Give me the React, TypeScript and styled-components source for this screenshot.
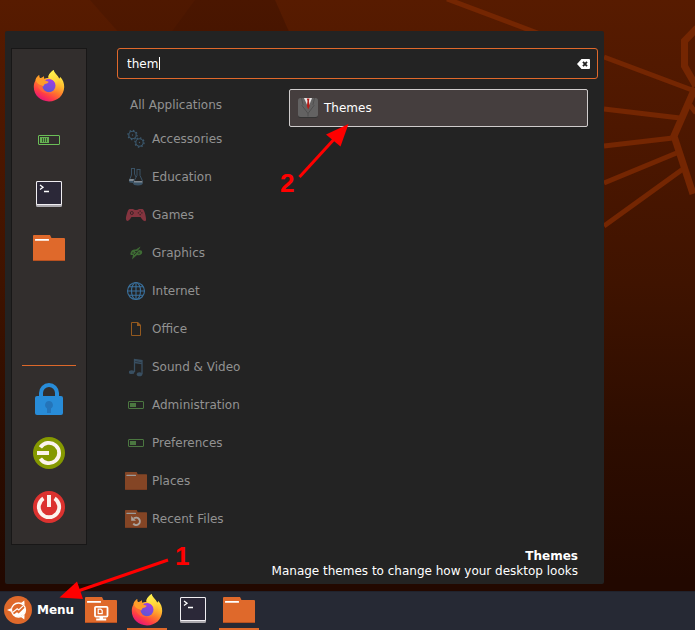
import React, { useState } from "react";
import styled, { createGlobalStyle } from "styled-components";

const GlobalStyle = createGlobalStyle`
  * { box-sizing: border-box; }
  body { margin: 0; font-family: "DejaVu Sans", sans-serif; font-size: 12px; line-height: 15px; color: #fff; }
  button { font: inherit; color: inherit; border: 0; padding: 0; background: none; cursor: pointer; }
  svg { display: block; flex: none; }
`;

const Desktop = styled.div`
  position: relative;
  display: flex;
  flex-direction: column;
  min-height: 100vh;
  overflow: hidden;
  background: linear-gradient(#571b00 0%, #4d1700 20%, #3f1300 45%, #2e0d00 68%, #220800 92%);
`;

const Wallpaper = styled.svg`
  position: absolute;
  top: 0;
  right: 0;
`;

const Workspace = styled.main`
  position: relative;
  flex: 1;
  display: flex;
  padding: 31px 91px 7px 5px;
`;

const MenuPanel = styled.section`
  flex: 1;
  display: flex;
  flex-direction: column;
  padding: 17px 6px 0;
  background: #232323;
  border-radius: 2px;
`;

const PanelBody = styled.div`
  flex: 1;
  display: flex;
  gap: 30px;
`;

const Sidebar = styled.nav`
  width: 76px;
  display: flex;
  flex-direction: column;
  padding: 10px 9px;
  border: 1px solid #181717;
  background: #322e2d;
`;

const SidebarButton = styled.button`
  height: 54px;
  display: flex;
  align-items: center;
  justify-content: center;
`;

const Divider = styled.hr`
  width: 54px;
  height: 1px;
  margin: auto auto 6px;
  border: 0;
  background: #dd682a;
`;

const Content = styled.div`
  flex: 1;
  min-width: 0;
`;

const SearchBox = styled.label`
  display: flex;
  align-items: center;
  height: 31px;
  padding: 0 7px 0 9px;
  border: 1px solid #e0682b;
  border-radius: 3px;
`;

const SearchInput = styled.input`
  field-sizing: content;
  min-width: 1px;
  padding: 2px 1px 0 0;
  border: 0;
  outline: 0;
  background: none;
  color: #fff;
  caret-color: transparent;
  font: inherit;
`;

const Caret = styled.span`
  width: 1px;
  height: 13px;
  background: #fff;
`;

const ClearButton = styled.button`
  margin-left: auto;
`;

const Columns = styled.div`
  display: flex;
  padding: 10px 10px 0 0;
`;

const CategoryList = styled.ul`
  width: 172px;
  margin: 0;
  padding: 0 0 0 8px;
  list-style: none;
`;

const Category = styled.button<{ $first?: boolean }>`
  display: flex;
  align-items: center;
  gap: 5px;
  width: 100%;
  height: ${(p) => (p.$first ? 31 : 38)}px;
  padding: ${(p) => (p.$first ? "2px 0 0 5px" : "0")};
  color: #929292;
`;

const Results = styled.div`
  flex: 1;
  position: relative;
`;

const ResultButton = styled.button`
  display: flex;
  align-items: center;
  gap: 5px;
  width: 100%;
  height: 38px;
  padding: 0 7px;
  border: 1px solid #cfcccc;
  border-radius: 2px;
  background: #453e3e;
`;

const Description = styled.footer`
  padding: 4px 20px 5px;
  text-align: right;
`;

const DescriptionTitle = styled.strong`
  display: block;
`;

const Taskbar = styled.footer`
  position: relative;
  display: flex;
  gap: 6px;
  height: 39px;
  border-top: 1px solid #20222c;
  background: #262934;
`;

const MenuButton = styled.button`
  display: flex;
  align-items: center;
  gap: 5px;
  width: 75px;
  padding: 0 0 2px 4px;
  font-weight: bold;
`;

const TaskButton = styled.button<{ $open?: boolean }>`
  display: flex;
  align-items: center;
  justify-content: center;
  width: 40px;
  border-bottom: 2px solid ${(p) => (p.$open ? "#dd682a" : "transparent")};
`;

const Callout = styled.svg<{ $left: number; $top: number }>`
  position: absolute;
  left: ${(p) => p.$left}px;
  top: ${(p) => p.$top}px;
  pointer-events: none;
  fill: #f00;
  stroke: none;
  font-family: "Liberation Sans", sans-serif;
  font-size: 26px;
  font-weight: bold;
`;

function Firefox({ id }: { id: string }) {
  return (
    <svg width="32" height="32" viewBox="0 0 32 32">
      <defs>
        <linearGradient id={`${id}-body`} x1="0.8" y1="0.1" x2="0.3" y2="1">
          <stop offset="0" stopColor="#fff04a" />
          <stop offset="0.3" stopColor="#ffbd2f" />
          <stop offset="0.55" stopColor="#ff7a2c" />
          <stop offset="0.78" stopColor="#ff3d45" />
          <stop offset="1" stopColor="#e5127d" />
        </linearGradient>
        <linearGradient id={`${id}-globe`} x1="0.7" y1="0" x2="0.3" y2="1">
          <stop offset="0" stopColor="#a13ce6" />
          <stop offset="1" stopColor="#5a58cf" />
        </linearGradient>
        <linearGradient id={`${id}-flame`} x1="0.4" y1="0" x2="0.6" y2="1">
          <stop offset="0" stopColor="#fff44f" />
          <stop offset="0.5" stopColor="#ffd43a" />
          <stop offset="1" stopColor="#ff8a2a" stopOpacity="0" />
        </linearGradient>
      </defs>
      <path
        fill={`url(#${id}-body)`}
        d="M20.5 0C21.5 3.2 24.8 5.2 26.3 8.6 27 8.3 27 7.4 27 6.8 30 9.5 31.3 13.5 31.2 17 31 25.5 24.4 31.4 16 31.4S.8 25.2.8 17C.8 14.3 1.4 12 2.6 10.2 2.7 8.2 4.3 6.4 6.2 4.9 6.1 6.2 6.3 7.4 6.8 8 8.4 7.8 9.6 7.7 10.7 6.2L11.3 9C12.5 8 13.8 7.8 15.3 8 14.7 4.6 18.2 3 20.5 0Z"
      />
      <circle cx="16" cy="15.6" r="6.7" fill={`url(#${id}-globe)`} />
      <path
        fill={`url(#${id}-flame)`}
        d="M20.5 0C14.5 4.3 15.2 7.4 17.2 8.8 20.5 10 23.5 13 22.3 17 21.2 21 18.5 22.7 15 22.3 19.5 25.5 26 22 27 16.5 27.4 10.2 21.8 6.5 20.5 0Z"
      />
      <path
        fill="#ff9d29"
        d="M6.2 4.9C6.1 6.2 6.3 7.4 6.8 8 8.4 7.8 9.6 7.7 10.7 6.2L11.3 9 12.7 10.8 15.7 11.8C15.3 13.3 13 13.9 11.5 14.2L10 16.7C8.8 14.1 6.5 15.8 4 12.4L2.6 10.2C2.7 8.2 4.3 6.4 6.2 4.9Z"
      />
      <path fill="#ff6839" fillOpacity=".75" d="M4 14C6 15.5 8.5 14.8 9.3 16.8 10.2 20.4 13 22.4 16 22.4 11 24.3 6 20.7 4 14Z" />
    </svg>
  );
}

const Terminal = () => (
  <svg width="26" height="26" viewBox="0 0 26 26">
    <rect width="26" height="26" rx="1.5" fill="#aaa8ad" />
    <rect width="26" height="24" rx="1.5" fill="#f0eef2" />
    <rect x="1" y="1" width="24" height="22" rx=".5" fill="#2b2838" />
    <path d="M4 4L7 6.2 4 8.4M8 10.5h5" fill="none" stroke="#fff" strokeWidth="1.3" />
  </svg>
);

function Folder({ muted, badge, size = 32 }: { muted?: boolean; badge?: "recent" | "desktop"; size?: number }) {
  return (
    <svg width={size} height={muted ? 18 : 26} viewBox="0 0 32 26">
      <path fill={muted ? "#844525" : "#df692b"} d="M0 1Q0 0 1 0H17L18.5 3H31Q32 3 32 4V25Q32 26 31 26H1Q0 26 0 25Z" />
      <path fill={muted ? "#733a20" : "#b85120"} d="M0 25H32Q32 26 31 26H1Q0 26 0 25Z" />
      <rect x="2" y="4" width="14" height="1.8" rx=".5" fill={muted ? "#999" : "#fff"} />
      {badge === "desktop" && (
        <g fill="none" stroke="#fff" strokeWidth="1.8">
          <rect x="10" y="9.8" width="12.500" height="9.800" rx="1" />
          <path d="M13.200 12.200h2.600l1.400 1.400v3h-4z" strokeWidth="1.200" />
          <path fill="#fff" stroke="none" d="M14.500 19.500h3.500v2h3.200v2H11.200v-2h3.300z" />
        </g>
      )}
      {badge === "recent" && (
        <g>
          <path d="M13 12A5.400 5.400 0 1 1 12 19.800" fill="none" stroke="#aaa39e" strokeWidth="2.800" />
          <path d="M9 8.500V15.500H16Z" fill="#aaa39e" />
        </g>
      )}
    </svg>
  );
}

const Battery = () => (
  <svg width="22" height="10" viewBox="0 0 22 10">
    <rect x=".5" y=".5" width="21" height="9" rx=".5" fill="none" stroke="#6bbf57" />
    <path fill="#66b153" d="M2 2h9v6H2z" />
    <path d="M4.5 3v4M6.5 3v4M8.5 3v4" stroke="#37592e" />
  </svg>
);

const Lock = () => (
  <svg width="28" height="32" viewBox="0 0 28 32">
    <path d="M6 14V10A8 8 0 0 1 22 10V14" fill="none" stroke="#288cd8" strokeWidth="4" />
    <rect y="13" width="28" height="19" rx="2" fill="#288cd8" />
    <path fill="#2474b9" d="M14 18a4 4 0 0 1 2 7.4V30h-4v-4.6A4 4 0 0 1 14 18Z" />
  </svg>
);

function RoundPower({ colour, turned }: { colour: string; turned?: boolean }) {
  return (
    <svg width="32" height="32" viewBox="0 0 32 32">
      <circle cx="16" cy="16" r="16" fill={colour} />
      <g fill="none" stroke="#fcf3ed" transform={turned ? "rotate(-90 16 16)" : undefined}>
        <path d="M10.4 7.4A10.2 10.2 0 1 0 21.6 7.4" strokeWidth="3.8" />
        <path d="M16 4V16" strokeWidth="4" />
      </g>
    </svg>
  );
}

const DistroLogo = () => (
  <svg width="28" height="28" viewBox="0 0 28 28">
    <circle cx="14" cy="14" r="14" fill="#df692b" />
    <circle cx="14.5" cy="14" r="7" fill="none" stroke="#fff" strokeWidth="1.3" />
    <path fill="#fff" d="M9.300 18.700L13 16.200 14.700 17.500 20.800 11.500A7 7 0 0 1 9.500 18.900Z" />
    <path d="M8.500 16.500L13.200 12.800 14.800 14 19 9.800" fill="none" stroke="#fff" strokeWidth="1.1" />
    <path fill="#fff" d="M3 14L7 12.2V15.8ZM20.3 4.6L20.6 9 17 7ZM20.3 23.4L17 21 20.6 19Z" />
  </svg>
);

const Gear = ({ x, y }: { x: number; y: number }) => (
  <g fill="none" stroke="#3c5a70">
    <circle cx={x} cy={y} r="3.7" strokeWidth="1.1" />
    <circle cx={x} cy={y} r="4.6" strokeWidth="1.2" strokeDasharray="1.5 2.1" />
    <circle cx={x} cy={y} r=".7" fill="#3c5a70" stroke="none" />
  </g>
);

const categoryIcons: Record<string, React.ReactNode> = {
  Accessories: (
    <>
      <Gear x={7.5} y={7} />
      <Gear x={14.5} y={14.5} />
    </>
  ),
  Education: (
    <>
      <path d="M6 2.500h4M6.500 3v6L4.500 14M9.500 3v5L11 11M11.500 3.500h4M12 4v5.500L9 15M15 4v5.500L17.500 15" fill="none" stroke="#3a5265" />
      <path fill="#7f8890" d="M4.500 13h4.500l-.5 2H4zM9 15h8.500v2H8.500z" />
      <path fill="#3a5265" d="M4 15H8.500V16.500H18Q18 19.500 13 19.500T8 17L4.500 16.500Z" />
    </>
  ),
  Games: (
    <>
      <path fill="#84343f" d="M4.5 5H8Q9 6 11 6T14 5h3.5Q19 5 20.5 11.5T19.5 17Q18 17 15.5 13H6.5Q4 17 2.2 17 0 16 1.5 11 3 5 4.5 5Z" />
      <circle cx="6.8" cy="9" r="1.5" fill="none" stroke="#382326" />
      <path fill="#382326" d="M14.5 6.5h1.3v1.3h-1.3zM12.8 8.2h1.3v1.3h-1.3zM16.2 8.2h1.3v1.3h-1.3zM14.5 9.9h1.3v1.3h-1.3z" />
    </>
  ),
  Graphics: (
    <>
      <path fill="#3e6b34" d="M6 10Q6.5 7 11 7.5L15.5 4.5 14 8Q18 8 17 11.5 15.5 14 12 13L7 17.5 8 13Q4 13.5 6 10Z" />
      <path d="M7 11h2M10 9.5h2M13 11h2M9 13L15 6.5" stroke="#232323" strokeWidth=".8" />
    </>
  ),
  Internet: (
    <g fill="none" stroke="#3a719e" strokeWidth="1.1">
      <circle cx="11" cy="11" r="8.5" />
      <ellipse cx="11" cy="11" rx="4.5" ry="8.5" />
      <path d="M11 2.5v17M2.5 11h17M4 6.8h14M4 15.2h14" />
    </g>
  ),
  Office: (
    <>
      <path d="M6.5 4.5H12.5L15.5 7.5V17.5H6.5Z" fill="none" stroke="#93591f" />
      <path fill="#93591f" d="M12 4H13L16 7V8H12Z" />
    </>
  ),
  "Sound & Video": (
    <>
      <path d="M9.500 16V3.500L17 4.500V18" fill="none" stroke="#394f61" strokeWidth="1.3" />
      <path d="M9.500 4.500L17 5.500M9.500 6.500L17 7.500" fill="none" stroke="#394f61" strokeWidth="1.500" />
      <ellipse cx="6.7" cy="16.2" rx="2.8" ry="1.9" fill="#394f61" />
      <ellipse cx="14.5" cy="18.2" rx="2.8" ry="2" fill="#394f61" />
    </>
  ),
};

const Toggle = () => (
  <>
    <rect x="3.5" y="7.5" width="15" height="7" rx=".5" fill="none" stroke="#4b7740" />
    <path fill="#4b7740" d="M5 9h6v4H5z" />
  </>
);
categoryIcons.Administration = <Toggle />;
categoryIcons.Preferences = <Toggle />;

const Suit = () => (
  <svg width="22" height="22" viewBox="-1 -1 22 22">
    <rect y="1" width="20" height="19" rx="2.5" fill="#343434" />
    <rect width="20" height="19" rx="2.5" fill="#636262" />
    <path d="M3.500 0L5 6.500 4 7.500 10 15.500V18.500M16.500 0L15 6.500 16 7.500 10 15.500" fill="none" stroke="#4a4949" strokeWidth=".8" />
    <path fill="#e8e6e6" d="M6 0H14L10.300 9.500Z" />
    <path fill="#b51c18" d="M8.800 0.500H11.500L10.900 3 11.700 8 10.200 11.500 8.900 8 9.500 3Z" />
  </svg>
);

const categories = [
  "Accessories", "Education", "Games", "Graphics", "Internet", "Office",
  "Sound & Video", "Administration", "Preferences", "Places", "Recent Files",
];

function CategoryIcon({ name }: { name: string }) {
  if (name === "Places") return <Folder muted size={22} />;
  if (name === "Recent Files") return <Folder muted size={22} badge="recent" />;
  return <svg width="22" height="22" viewBox="0 0 22 22">{categoryIcons[name]}</svg>;
}

export default function App() {
  const [query, setQuery] = useState("them");
  return (
    <Desktop>
      <GlobalStyle />
      <Wallpaper width="695" height="600" viewBox="0 0 695 600" aria-hidden="true">
        <path fill="#000" fillOpacity=".09" d="M90 0H275L290 34H120Z" />
        <path fill="#000" fillOpacity=".06" d="M195 0H275L290 34H170Z" />
        <g fill="none" stroke="#742602" strokeWidth="5">
          <path d="M447 -1L548 37M604 57L692 90M604 109L680 118M604 146L673 138M604 183L679 152M604 226L683 169M690 105L696 113" />
          <path strokeWidth="7" d="M697 28L684.5 41V66L696 86M695 88L674 136 693 194" />
        </g>
      </Wallpaper>
      <Workspace>
        <MenuPanel>
          <PanelBody>
            <Sidebar aria-label="Favorites">
              <SidebarButton aria-label="Firefox"><Firefox id="side" /></SidebarButton>
              <SidebarButton aria-label="Power statistics"><Battery /></SidebarButton>
              <SidebarButton aria-label="Terminal"><Terminal /></SidebarButton>
              <SidebarButton aria-label="Files"><Folder /></SidebarButton>
              <Divider />
              <SidebarButton aria-label="Lock screen"><Lock /></SidebarButton>
              <SidebarButton aria-label="Log out"><RoundPower colour="#859900" turned /></SidebarButton>
              <SidebarButton aria-label="Shut down"><RoundPower colour="#dc322f" /></SidebarButton>
            </Sidebar>
            <Content>
              <SearchBox>
                <SearchInput aria-label="Search" value={query} onChange={(e) => setQuery(e.target.value)} />
                <Caret />
                <ClearButton aria-label="Clear search" onClick={() => setQuery("")}>
                  <svg width="13" height="10" viewBox="0 0 13 10">
                    <path fill="#fff" d="M4.5 0H12Q13 0 13 1V9Q13 10 12 10H4.5L0 5Z" />
                    <path d="M6 2.8L10 7.2M10 2.8L6 7.2" stroke="#232323" strokeWidth="1.8" />
                  </svg>
                </ClearButton>
              </SearchBox>
              <Columns>
                <CategoryList>
                  <li><Category $first>All Applications</Category></li>
                  {categories.map((name) => (
                    <li key={name}>
                      <Category><CategoryIcon name={name} />{name}</Category>
                    </li>
                  ))}
                </CategoryList>
                <Results>
                  <ResultButton><Suit />Themes</ResultButton>
                  <Callout $left={-11} $top={33} width="75" height="75" viewBox="278 122 75 75">
                    <path d="M299.5 177L337 136" stroke="#f00" strokeWidth="3" />
                    <path d="M348.500 124L326 134.500 340.500 146.500Z" />
                    <text x="280" y="192">2</text>
                  </Callout>
                </Results>
              </Columns>
            </Content>
          </PanelBody>
          <Description>
            <DescriptionTitle>Themes</DescriptionTitle>
            Manage themes to change how your desktop looks
          </Description>
        </MenuPanel>
      </Workspace>
      <Taskbar>
        <MenuButton><DistroLogo />Menu</MenuButton>
        <TaskButton aria-label="Show desktop"><Folder badge="desktop" /></TaskButton>
        <TaskButton $open aria-label="Firefox"><Firefox id="task" /></TaskButton>
        <TaskButton aria-label="Terminal"><Terminal /></TaskButton>
        <TaskButton $open aria-label="Files"><Folder /></TaskButton>
        <Callout $left={55} $top={-52} width="140" height="65" viewBox="55 540 140 65">
          <path d="M168 560L78 591" stroke="#f00" strokeWidth="3" />
          <path d="M59.500 597.500L77 581.500 83 599Z" />
          <text x="175" y="565">1</text>
        </Callout>
      </Taskbar>
    </Desktop>
  );
}
